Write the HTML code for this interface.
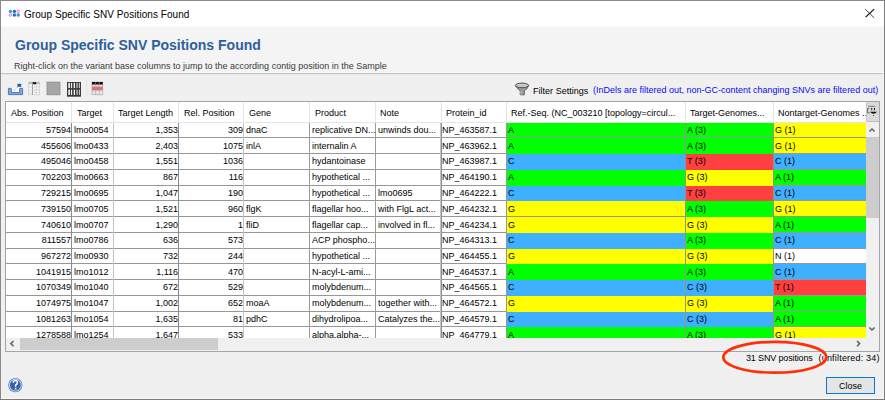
<!DOCTYPE html><html><head><meta charset="utf-8"><style>
*{margin:0;padding:0;box-sizing:border-box}
html,body{width:885px;height:400px;overflow:hidden;background:#f0f0f0;font-family:"Liberation Sans",sans-serif;color:#000}
.a{position:absolute}
.t{position:absolute;white-space:nowrap;font-size:9px;line-height:11px}
</style></head><body>

<div class="a" style="left:0;top:0;width:885px;height:27px;background:#fff"></div>
<div class="a" style="left:0;top:26px;width:885px;height:1px;background:#f9f9f9"></div>
<div class="a" style="left:0;top:27px;width:885px;height:46px;background:#f4f4f4"></div>
<div class="a" style="left:0;top:72px;width:885px;height:1px;background:#f8f8f8"></div>
<div class="a" style="left:0;top:73px;width:885px;height:1px;background:#c4c4c4"></div>
<div class="a" style="left:0;top:74px;width:885px;height:1px;background:#e8e8e8"></div>
<svg class="a" style="left:0;top:0" width="26" height="26"><circle cx="10.4" cy="11.4" r="1.7" fill="#1ea5e6"/><circle cx="14.4" cy="11.4" r="1.7" fill="#2a6db3"/><circle cx="18.2" cy="11.4" r="1.3" fill="none" stroke="#f25cc0" stroke-width="0.9"/><circle cx="10.4" cy="15" r="1.3" fill="none" stroke="#f25cc0" stroke-width="0.9"/><circle cx="14.4" cy="15" r="1.7" fill="#2a6db3"/><circle cx="18.2" cy="15" r="1.7" fill="#16a2ec"/></svg>
<div class="t" style="left:24px;top:9px;font-size:10px;line-height:12px;color:#000;letter-spacing:0.06px">Group Specific SNV Positions Found</div>
<svg class="a" style="left:860px;top:8px" width="18" height="12"><path d="M5.2 1.2 L14.2 9.8" stroke="#333" stroke-width="0.9"/><path d="M14.2 1.2 L5.6 9.2" stroke="#000" stroke-width="1.1"/></svg>
<div class="t" style="left:15px;top:37px;font-size:14px;line-height:16px;font-weight:bold;color:#2f5f9c">Group Specific SNV Positions Found</div>
<div class="t" style="left:14px;top:61px;font-size:9px;line-height:11px;color:#3a3a3a">Right-click on the variant base columns to jump to the according contig position in the Sample</div>
<div class="a" style="left:0;top:0;width:885px;height:1px;background:#8a8a8a"></div>
<div class="a" style="left:0;top:0;width:1px;height:400px;background:#8a8a8a"></div>
<div class="a" style="left:884px;top:0;width:1px;height:400px;background:#7a7a7a"></div>
<div class="a" style="left:1px;top:398px;width:883px;height:1px;background:#f8f8f8"></div>
<div class="a" style="left:883px;top:27px;width:1px;height:372px;background:#f8f8f8"></div>
<div class="a" style="left:0;top:399px;width:885px;height:1px;background:#7a7a7a"></div>
<div class="a" style="left:5px;top:101px;width:875px;height:251px;border:1px solid #a2a5ab;background:#fff"></div>
<div class="a" style="left:71px;top:102px;width:1px;height:20px;background:#e5e5e5"></div>
<div class="a" style="left:113px;top:102px;width:1px;height:20px;background:#e5e5e5"></div>
<div class="a" style="left:178px;top:102px;width:1px;height:20px;background:#e5e5e5"></div>
<div class="a" style="left:243px;top:102px;width:1px;height:20px;background:#e5e5e5"></div>
<div class="a" style="left:309px;top:102px;width:1px;height:20px;background:#e5e5e5"></div>
<div class="a" style="left:375px;top:102px;width:1px;height:20px;background:#e5e5e5"></div>
<div class="a" style="left:441px;top:102px;width:1px;height:20px;background:#e5e5e5"></div>
<div class="a" style="left:506px;top:102px;width:1px;height:20px;background:#e5e5e5"></div>
<div class="a" style="left:685px;top:102px;width:1px;height:20px;background:#e5e5e5"></div>
<div class="a" style="left:773px;top:102px;width:1px;height:20px;background:#e5e5e5"></div>

<div class="a" style="left:6px;top:122px;width:860px;height:1px;background:#e5e5e5"></div>
<div class="t" style="left:11px;top:108px;color:#000">Abs. Position</div>
<div class="t" style="left:77px;top:108px;color:#000">Target</div>
<div class="t" style="left:118px;top:108px;color:#000">Target Length</div>
<div class="t" style="left:184px;top:108px;color:#000">Rel. Position</div>
<div class="t" style="left:249px;top:108px;color:#000">Gene</div>
<div class="t" style="left:315px;top:108px;color:#000">Product</div>
<div class="t" style="left:380px;top:108px;color:#000">Note</div>
<div class="t" style="left:446px;top:108px;color:#000">Protein_id</div>
<div class="t" style="left:511px;top:108px;color:#000">Ref.-Seq. (NC_003210 [topology=circul...</div>
<div class="t" style="left:690px;top:108px;color:#000">Target-Genomes...</div>
<div class="t" style="left:778px;top:108px;color:#000">Nontarget-Genomes ...</div>
<div class="a" style="left:507px;top:123px;width:178px;height:15px;background:#00ff00"></div>
<div class="a" style="left:686px;top:123px;width:87px;height:15px;background:#00ff00"></div>
<div class="a" style="left:774px;top:123px;width:92px;height:15px;background:#ffff00"></div>
<div class="a" style="left:507px;top:138px;width:178px;height:16px;background:#00ff00"></div>
<div class="a" style="left:686px;top:138px;width:87px;height:16px;background:#00ff00"></div>
<div class="a" style="left:774px;top:138px;width:92px;height:16px;background:#ffff00"></div>
<div class="a" style="left:507px;top:154px;width:178px;height:16px;background:#3fb0ff"></div>
<div class="a" style="left:686px;top:154px;width:87px;height:16px;background:#ff4040"></div>
<div class="a" style="left:774px;top:154px;width:92px;height:16px;background:#3fb0ff"></div>
<div class="a" style="left:507px;top:170px;width:178px;height:16px;background:#00ff00"></div>
<div class="a" style="left:686px;top:170px;width:87px;height:16px;background:#ffff00"></div>
<div class="a" style="left:774px;top:170px;width:92px;height:16px;background:#00ff00"></div>
<div class="a" style="left:507px;top:186px;width:178px;height:15px;background:#3fb0ff"></div>
<div class="a" style="left:686px;top:186px;width:87px;height:15px;background:#ff4040"></div>
<div class="a" style="left:774px;top:186px;width:92px;height:15px;background:#3fb0ff"></div>
<div class="a" style="left:507px;top:201px;width:178px;height:16px;background:#ffff00"></div>
<div class="a" style="left:686px;top:201px;width:87px;height:16px;background:#00ff00"></div>
<div class="a" style="left:774px;top:201px;width:92px;height:16px;background:#ffff00"></div>
<div class="a" style="left:507px;top:217px;width:178px;height:16px;background:#ffff00"></div>
<div class="a" style="left:686px;top:217px;width:87px;height:16px;background:#ffff00"></div>
<div class="a" style="left:774px;top:217px;width:92px;height:16px;background:#00ff00"></div>
<div class="a" style="left:507px;top:233px;width:178px;height:16px;background:#3fb0ff"></div>
<div class="a" style="left:686px;top:233px;width:87px;height:16px;background:#00ff00"></div>
<div class="a" style="left:774px;top:233px;width:92px;height:16px;background:#3fb0ff"></div>
<div class="a" style="left:507px;top:249px;width:178px;height:15px;background:#ffff00"></div>
<div class="a" style="left:686px;top:249px;width:87px;height:15px;background:#ffff00"></div>
<div class="a" style="left:774px;top:249px;width:92px;height:15px;background:#ffffff"></div>
<div class="a" style="left:507px;top:264px;width:178px;height:16px;background:#00ff00"></div>
<div class="a" style="left:686px;top:264px;width:87px;height:16px;background:#00ff00"></div>
<div class="a" style="left:774px;top:264px;width:92px;height:16px;background:#3fb0ff"></div>
<div class="a" style="left:507px;top:280px;width:178px;height:16px;background:#3fb0ff"></div>
<div class="a" style="left:686px;top:280px;width:87px;height:16px;background:#3fb0ff"></div>
<div class="a" style="left:774px;top:280px;width:92px;height:16px;background:#ff4040"></div>
<div class="a" style="left:507px;top:296px;width:178px;height:16px;background:#ffff00"></div>
<div class="a" style="left:686px;top:296px;width:87px;height:16px;background:#ffff00"></div>
<div class="a" style="left:774px;top:296px;width:92px;height:16px;background:#00ff00"></div>
<div class="a" style="left:507px;top:312px;width:178px;height:15px;background:#3fb0ff"></div>
<div class="a" style="left:686px;top:312px;width:87px;height:15px;background:#3fb0ff"></div>
<div class="a" style="left:774px;top:312px;width:92px;height:15px;background:#00ff00"></div>
<div class="a" style="left:507px;top:327px;width:178px;height:16px;background:#00ff00"></div>
<div class="a" style="left:686px;top:327px;width:87px;height:16px;background:#00ff00"></div>
<div class="a" style="left:774px;top:327px;width:92px;height:16px;background:#ffff00"></div>
<div class="t" style="left:6px;width:65px;text-align:right;top:125px">57594</div>
<div class="t" style="left:74px;top:125px">lmo0054</div>
<div class="t" style="left:114px;width:64px;text-align:right;top:125px">1,353</div>
<div class="t" style="left:179px;width:64px;text-align:right;top:125px">309</div>
<div class="t" style="left:246px;top:125px">dnaC</div>
<div class="t" style="left:312px;top:125px">replicative DN...</div>
<div class="t" style="left:378px;top:125px">unwinds dou...</div>
<div class="t" style="left:442px;top:125px">NP_463587.1</div>
<div class="t" style="left:508px;top:125px">A</div>
<div class="t" style="left:687px;top:125px">A (3)</div>
<div class="t" style="left:775px;top:125px">G (1)</div>
<div class="t" style="left:6px;width:65px;text-align:right;top:141px">455606</div>
<div class="t" style="left:74px;top:141px">lmo0433</div>
<div class="t" style="left:114px;width:64px;text-align:right;top:141px">2,403</div>
<div class="t" style="left:179px;width:64px;text-align:right;top:141px">1075</div>
<div class="t" style="left:246px;top:141px">inlA</div>
<div class="t" style="left:312px;top:141px">internalin A</div>
<div class="t" style="left:442px;top:141px">NP_463962.1</div>
<div class="t" style="left:508px;top:141px">A</div>
<div class="t" style="left:687px;top:141px">A (3)</div>
<div class="t" style="left:775px;top:141px">G (1)</div>
<div class="t" style="left:6px;width:65px;text-align:right;top:156px">495046</div>
<div class="t" style="left:74px;top:156px">lmo0458</div>
<div class="t" style="left:114px;width:64px;text-align:right;top:156px">1,551</div>
<div class="t" style="left:179px;width:64px;text-align:right;top:156px">1036</div>
<div class="t" style="left:312px;top:156px">hydantoinase</div>
<div class="t" style="left:442px;top:156px">NP_463987.1</div>
<div class="t" style="left:508px;top:156px">C</div>
<div class="t" style="left:687px;top:156px">T (3)</div>
<div class="t" style="left:775px;top:156px">C (1)</div>
<div class="t" style="left:6px;width:65px;text-align:right;top:172px">702203</div>
<div class="t" style="left:74px;top:172px">lmo0663</div>
<div class="t" style="left:114px;width:64px;text-align:right;top:172px">867</div>
<div class="t" style="left:179px;width:64px;text-align:right;top:172px">116</div>
<div class="t" style="left:312px;top:172px">hypothetical ...</div>
<div class="t" style="left:442px;top:172px">NP_464190.1</div>
<div class="t" style="left:508px;top:172px">A</div>
<div class="t" style="left:687px;top:172px">G (3)</div>
<div class="t" style="left:775px;top:172px">A (1)</div>
<div class="t" style="left:6px;width:65px;text-align:right;top:188px">729215</div>
<div class="t" style="left:74px;top:188px">lmo0695</div>
<div class="t" style="left:114px;width:64px;text-align:right;top:188px">1,047</div>
<div class="t" style="left:179px;width:64px;text-align:right;top:188px">190</div>
<div class="t" style="left:312px;top:188px">hypothetical ...</div>
<div class="t" style="left:378px;top:188px">lmo0695</div>
<div class="t" style="left:442px;top:188px">NP_464222.1</div>
<div class="t" style="left:508px;top:188px">C</div>
<div class="t" style="left:687px;top:188px">T (3)</div>
<div class="t" style="left:775px;top:188px">C (1)</div>
<div class="t" style="left:6px;width:65px;text-align:right;top:204px">739150</div>
<div class="t" style="left:74px;top:204px">lmo0705</div>
<div class="t" style="left:114px;width:64px;text-align:right;top:204px">1,521</div>
<div class="t" style="left:179px;width:64px;text-align:right;top:204px">960</div>
<div class="t" style="left:246px;top:204px">flgK</div>
<div class="t" style="left:312px;top:204px">flagellar hoo...</div>
<div class="t" style="left:378px;top:204px">with FlgL act...</div>
<div class="t" style="left:442px;top:204px">NP_464232.1</div>
<div class="t" style="left:508px;top:204px">G</div>
<div class="t" style="left:687px;top:204px">A (3)</div>
<div class="t" style="left:775px;top:204px">G (1)</div>
<div class="t" style="left:6px;width:65px;text-align:right;top:220px">740610</div>
<div class="t" style="left:74px;top:220px">lmo0707</div>
<div class="t" style="left:114px;width:64px;text-align:right;top:220px">1,290</div>
<div class="t" style="left:179px;width:64px;text-align:right;top:220px">1</div>
<div class="t" style="left:246px;top:220px">fliD</div>
<div class="t" style="left:312px;top:220px">flagellar cap...</div>
<div class="t" style="left:378px;top:220px">involved in fl...</div>
<div class="t" style="left:442px;top:220px">NP_464234.1</div>
<div class="t" style="left:508px;top:220px">G</div>
<div class="t" style="left:687px;top:220px">G (3)</div>
<div class="t" style="left:775px;top:220px">A (1)</div>
<div class="t" style="left:6px;width:65px;text-align:right;top:235px">811557</div>
<div class="t" style="left:74px;top:235px">lmo0786</div>
<div class="t" style="left:114px;width:64px;text-align:right;top:235px">636</div>
<div class="t" style="left:179px;width:64px;text-align:right;top:235px">573</div>
<div class="t" style="left:312px;top:235px">ACP phospho...</div>
<div class="t" style="left:442px;top:235px">NP_464313.1</div>
<div class="t" style="left:508px;top:235px">C</div>
<div class="t" style="left:687px;top:235px">A (3)</div>
<div class="t" style="left:775px;top:235px">C (1)</div>
<div class="t" style="left:6px;width:65px;text-align:right;top:251px">967272</div>
<div class="t" style="left:74px;top:251px">lmo0930</div>
<div class="t" style="left:114px;width:64px;text-align:right;top:251px">732</div>
<div class="t" style="left:179px;width:64px;text-align:right;top:251px">244</div>
<div class="t" style="left:312px;top:251px">hypothetical ...</div>
<div class="t" style="left:442px;top:251px">NP_464455.1</div>
<div class="t" style="left:508px;top:251px">G</div>
<div class="t" style="left:687px;top:251px">G (3)</div>
<div class="t" style="left:775px;top:251px">N (1)</div>
<div class="t" style="left:6px;width:65px;text-align:right;top:267px">1041915</div>
<div class="t" style="left:74px;top:267px">lmo1012</div>
<div class="t" style="left:114px;width:64px;text-align:right;top:267px">1,116</div>
<div class="t" style="left:179px;width:64px;text-align:right;top:267px">470</div>
<div class="t" style="left:312px;top:267px">N-acyl-L-ami...</div>
<div class="t" style="left:442px;top:267px">NP_464537.1</div>
<div class="t" style="left:508px;top:267px">A</div>
<div class="t" style="left:687px;top:267px">A (3)</div>
<div class="t" style="left:775px;top:267px">C (1)</div>
<div class="t" style="left:6px;width:65px;text-align:right;top:282px">1070349</div>
<div class="t" style="left:74px;top:282px">lmo1040</div>
<div class="t" style="left:114px;width:64px;text-align:right;top:282px">672</div>
<div class="t" style="left:179px;width:64px;text-align:right;top:282px">529</div>
<div class="t" style="left:312px;top:282px">molybdenum...</div>
<div class="t" style="left:442px;top:282px">NP_464565.1</div>
<div class="t" style="left:508px;top:282px">C</div>
<div class="t" style="left:687px;top:282px">C (3)</div>
<div class="t" style="left:775px;top:282px">T (1)</div>
<div class="t" style="left:6px;width:65px;text-align:right;top:298px">1074975</div>
<div class="t" style="left:74px;top:298px">lmo1047</div>
<div class="t" style="left:114px;width:64px;text-align:right;top:298px">1,002</div>
<div class="t" style="left:179px;width:64px;text-align:right;top:298px">652</div>
<div class="t" style="left:246px;top:298px">moaA</div>
<div class="t" style="left:312px;top:298px">molybdenum...</div>
<div class="t" style="left:378px;top:298px">together with...</div>
<div class="t" style="left:442px;top:298px">NP_464572.1</div>
<div class="t" style="left:508px;top:298px">G</div>
<div class="t" style="left:687px;top:298px">G (3)</div>
<div class="t" style="left:775px;top:298px">A (1)</div>
<div class="t" style="left:6px;width:65px;text-align:right;top:314px">1081263</div>
<div class="t" style="left:74px;top:314px">lmo1054</div>
<div class="t" style="left:114px;width:64px;text-align:right;top:314px">1,635</div>
<div class="t" style="left:179px;width:64px;text-align:right;top:314px">81</div>
<div class="t" style="left:246px;top:314px">pdhC</div>
<div class="t" style="left:312px;top:314px">dihydrolipoa...</div>
<div class="t" style="left:378px;top:314px">Catalyzes the...</div>
<div class="t" style="left:442px;top:314px">NP_464579.1</div>
<div class="t" style="left:508px;top:314px">C</div>
<div class="t" style="left:687px;top:314px">C (3)</div>
<div class="t" style="left:775px;top:314px">A (1)</div>
<div class="t" style="left:6px;width:65px;text-align:right;top:330px">1278588</div>
<div class="t" style="left:74px;top:330px">lmo1254</div>
<div class="t" style="left:114px;width:64px;text-align:right;top:330px">1,647</div>
<div class="t" style="left:179px;width:64px;text-align:right;top:330px">533</div>
<div class="t" style="left:312px;top:330px">alpha,alpha-...</div>
<div class="t" style="left:442px;top:330px">NP_464779.1</div>
<div class="t" style="left:508px;top:330px">A</div>
<div class="t" style="left:687px;top:330px">A (3)</div>
<div class="t" style="left:775px;top:330px">G (1)</div>
<div class="a" style="left:6px;top:137px;width:500px;height:1px;background:#979797"></div>
<div class="a" style="left:773px;top:137px;width:93px;height:1px;background:#979797"></div>
<div class="a" style="left:506px;top:137px;width:179px;height:1px;background:#979797"></div>
<div class="a" style="left:685px;top:137px;width:88px;height:1px;background:#979797"></div>
<div class="a" style="left:6px;top:153px;width:500px;height:1px;background:#979797"></div>
<div class="a" style="left:773px;top:153px;width:93px;height:1px;background:#979797"></div>
<div class="a" style="left:6px;top:169px;width:500px;height:1px;background:#979797"></div>
<div class="a" style="left:773px;top:169px;width:93px;height:1px;background:#979797"></div>
<div class="a" style="left:6px;top:185px;width:500px;height:1px;background:#979797"></div>
<div class="a" style="left:773px;top:185px;width:93px;height:1px;background:#979797"></div>
<div class="a" style="left:6px;top:200px;width:500px;height:1px;background:#979797"></div>
<div class="a" style="left:773px;top:200px;width:93px;height:1px;background:#979797"></div>
<div class="a" style="left:6px;top:216px;width:500px;height:1px;background:#979797"></div>
<div class="a" style="left:773px;top:216px;width:93px;height:1px;background:#979797"></div>
<div class="a" style="left:506px;top:216px;width:179px;height:1px;background:#979797"></div>
<div class="a" style="left:6px;top:232px;width:500px;height:1px;background:#979797"></div>
<div class="a" style="left:773px;top:232px;width:93px;height:1px;background:#979797"></div>
<div class="a" style="left:6px;top:248px;width:500px;height:1px;background:#979797"></div>
<div class="a" style="left:773px;top:248px;width:93px;height:1px;background:#979797"></div>
<div class="a" style="left:6px;top:263px;width:500px;height:1px;background:#979797"></div>
<div class="a" style="left:773px;top:263px;width:93px;height:1px;background:#979797"></div>
<div class="a" style="left:6px;top:279px;width:500px;height:1px;background:#979797"></div>
<div class="a" style="left:773px;top:279px;width:93px;height:1px;background:#979797"></div>
<div class="a" style="left:6px;top:295px;width:500px;height:1px;background:#979797"></div>
<div class="a" style="left:773px;top:295px;width:93px;height:1px;background:#979797"></div>
<div class="a" style="left:6px;top:311px;width:500px;height:1px;background:#979797"></div>
<div class="a" style="left:773px;top:311px;width:93px;height:1px;background:#979797"></div>
<div class="a" style="left:6px;top:326px;width:500px;height:1px;background:#979797"></div>
<div class="a" style="left:773px;top:326px;width:93px;height:1px;background:#979797"></div>
<div class="a" style="left:71px;top:123px;width:1px;height:215px;background:#8c8c8c"></div>
<div class="a" style="left:113px;top:123px;width:1px;height:215px;background:#c4c4c4"></div>
<div class="a" style="left:178px;top:123px;width:1px;height:215px;background:#8c8c8c"></div>
<div class="a" style="left:243px;top:123px;width:1px;height:215px;background:#c4c4c4"></div>
<div class="a" style="left:309px;top:123px;width:1px;height:215px;background:#9a9a9a"></div>
<div class="a" style="left:375px;top:123px;width:1px;height:215px;background:#9a9a9a"></div>
<div class="a" style="left:441px;top:123px;width:1px;height:215px;background:#8e8e8e"></div>
<div class="a" style="left:506px;top:123px;width:1px;height:215px;background:#989898"></div>
<div class="a" style="left:685px;top:123px;width:1px;height:215px;background:#929292"></div>
<div class="a" style="left:773px;top:123px;width:1px;height:215px;background:#929292"></div>
<div class="a" style="left:440px;top:123px;width:1px;height:215px;background:#c4c4c4"></div>
<div class="a" style="left:6px;top:338px;width:860px;height:13px;background:#f0f0f0"></div>
<div class="a" style="left:20px;top:338px;width:198px;height:12px;background:#cdcdcd"></div>
<svg class="a" style="left:0;top:330px" width="885" height="22"><path d="M13.5 11 L10.8 13.6 L13.5 16.2" fill="none" stroke="#606060" stroke-width="1.5"/><path d="M857 11 L859.7 13.6 L857 16.2" fill="none" stroke="#606060" stroke-width="1.5"/></svg>
<div class="a" style="left:866px;top:102px;width:13px;height:249px;background:#f0f0f0"></div>
<div class="a" style="left:866px;top:137px;width:13px;height:81px;background:#cdcdcd"></div>
<svg class="a" style="left:860px;top:100px" width="25" height="240"><path d="M9.4 31.5 L12 29 L14.6 31.5" fill="none" stroke="#606060" stroke-width="1.5"/><path d="M9.4 227.5 L12 230 L14.6 227.5" fill="none" stroke="#606060" stroke-width="1.5"/></svg>
<div class="a" style="left:866px;top:102px;width:13px;height:20px;background:#dadada;border-left:1px solid #c8c8c8;border-bottom:1px solid #c0c0c0"></div>
<svg class="a" style="left:862px;top:100px" width="20" height="24"><rect x="6.2" y="5.8" width="7" height="1" fill="#777"/><path d="M7.2 8.5 H5.6 V12.8 H7.6" fill="none" stroke="#666" stroke-width="1"/><rect x="9.2" y="8" width="1" height="2.2" fill="#111"/><rect x="12" y="8" width="1" height="2.2" fill="#111"/><path d="M8 11.8 H15 Q13.6 13.6 11.5 13.8 Q9.4 13.6 8 11.8 Z" fill="#111"/><rect x="11" y="15" width="1" height="1" fill="#555"/></svg>
<div class="t" style="left:746px;top:353px;color:#000;letter-spacing:-0.15px">31 SNV positions</div><div class="t" style="left:818.5px;top:353px;color:#000;letter-spacing:0.2px">(unfiltered: 34)</div>
<svg class="a" style="left:0;top:0" width="885" height="400"><ellipse cx="774.8" cy="357.3" rx="51.5" ry="15.4" fill="none" stroke="#ff3008" stroke-width="2.7"/></svg>
<div class="a" style="left:826px;top:377px;width:49px;height:17px;border:1px solid #0a78d6;background:#e5e5e5"></div>
<div class="t" style="left:826px;top:381px;width:49px;text-align:center">Close</div>
<svg class="a" style="left:0;top:370px" width="30" height="30"><circle cx="15.3" cy="15.1" r="7.2" fill="#5a86c2"/><circle cx="15.3" cy="15.1" r="5.9" fill="none" stroke="#dfe8f4" stroke-width="0.9"/><circle cx="15.3" cy="15.1" r="5.2" fill="#3563a9"/><path d="M13.2 12.6 Q13.4 10.6 15.5 10.6 Q17.6 10.8 17.4 12.8 Q17.2 14 15.8 14.8 L15.6 16.8" fill="none" stroke="#fff" stroke-width="1.5"/><rect x="14.8" y="17.8" width="1.6" height="1.6" fill="#fff"/></svg>
<svg class="a" style="left:510px;top:80px" width="24" height="18"><path d="M5.4 5.5 Q8 10 10.2 10.5 V14.8 H14.4 V10.5 Q16.8 10 18.8 5.5 Z" fill="#9a9a9a" stroke="#5a5a5a" stroke-width="0.8"/><ellipse cx="12" cy="5.4" rx="6.6" ry="2.3" fill="#c8c8c8" stroke="#505050" stroke-width="1"/><path d="M11 11 V14.5" stroke="#d0d0d0" stroke-width="0.8"/></svg>
<div class="t" style="left:533px;top:86px;letter-spacing:0.02px">Filter Settings</div>
<div class="t" style="left:593px;top:85px;color:#0a0af0">(InDels are filtered out, non-GC-content changing SNVs are filtered out)</div>

<svg class="a" style="left:0;top:74px" width="110" height="26">
 <!-- export tray -->
 <rect x="11.5" y="14" width="8" height="4.3" fill="#fafafa"/>
 <path d="M8.4 14.4 H11.3 V18.5 H19.7 V14.4 H22.6 V20.6 H8.4 Z" fill="#86a6d6" stroke="#4272bc" stroke-width="0.9"/>
 <path d="M13.5 17 L17.5 13" stroke="#8a8ad8" stroke-width="1" stroke-dasharray="1 1"/>
 <rect x="17.4" y="9.8" width="3.8" height="3" fill="#1f5fb0"/>
 <!-- table light -->
 <rect x="28.7" y="8" width="11" height="12.8" fill="#f4f4f4" stroke="#c8c8c8" stroke-width="0.6"/>
 <rect x="28.7" y="8" width="11" height="2.2" fill="#bdbdbd"/>
 <rect x="32.8" y="8.2" width="3.4" height="2" fill="#111"/>
 <path d="M32.5 8 V20.8" stroke="#8a8a8a" stroke-width="0.8"/><path d="M36.3 10 V20.8" stroke="#d0d0d0" stroke-width="0.6"/>
 <path d="M28.7 13 H39.7 M28.7 16 H39.7 M28.7 18.6 H39.7" stroke="#cfcfcf" stroke-width="0.6"/>
 <!-- gray square -->
 <rect x="47" y="8.1" width="13" height="12.7" fill="#a6a6a6" stroke="#8c8c8c" stroke-width="0.8"/>
 <!-- dark columns -->
 <rect x="67" y="8" width="14" height="14.7" fill="#3a3a3a"/>
 <rect x="68.3" y="8.9" width="1.6" height="5.2" fill="#fff"/>
 <rect x="68.3" y="15.7" width="1.6" height="5.2" fill="#fff"/>
 <rect x="71" y="8.9" width="1.1" height="5.2" fill="#f4f4f4"/>
 <rect x="71" y="15.7" width="1.1" height="5.2" fill="#f4f4f4"/>
 <rect x="73.7" y="8.9" width="1.3" height="5.2" fill="#fff"/>
 <rect x="73.7" y="15.7" width="1.3" height="5.2" fill="#fff"/>
 <rect x="76.4" y="8.9" width="1.3" height="5.2" fill="#c8c8c8"/>
 <rect x="76.4" y="15.7" width="1.3" height="5.2" fill="#c8c8c8"/>
 <rect x="78.9" y="8.9" width="1.1" height="5.2" fill="#c8c8c8"/>
 <rect x="78.9" y="15.7" width="1.1" height="5.2" fill="#c8c8c8"/>
 <rect x="86.3" y="6" width="0.8" height="16" fill="#e2e2e2"/>
 <!-- red table -->
 <rect x="92" y="8" width="10.8" height="12.8" fill="#f8f8f8" stroke="#9a9a9a" stroke-width="0.6"/>
 <rect x="92" y="8" width="10.8" height="2.6" fill="#111"/>
 <rect x="92" y="12.5" width="10.8" height="4" fill="#e07070"/>
 <path d="M95.6 8 V20.8 M99.2 8 V20.8" stroke="#9a9a9a" stroke-width="0.6"/>
 <path d="M92 11.4 H102.8 M92 17.6 H102.8 M92 19.3 H102.8" stroke="#bbb" stroke-width="0.5"/>
</svg>

</body></html>
